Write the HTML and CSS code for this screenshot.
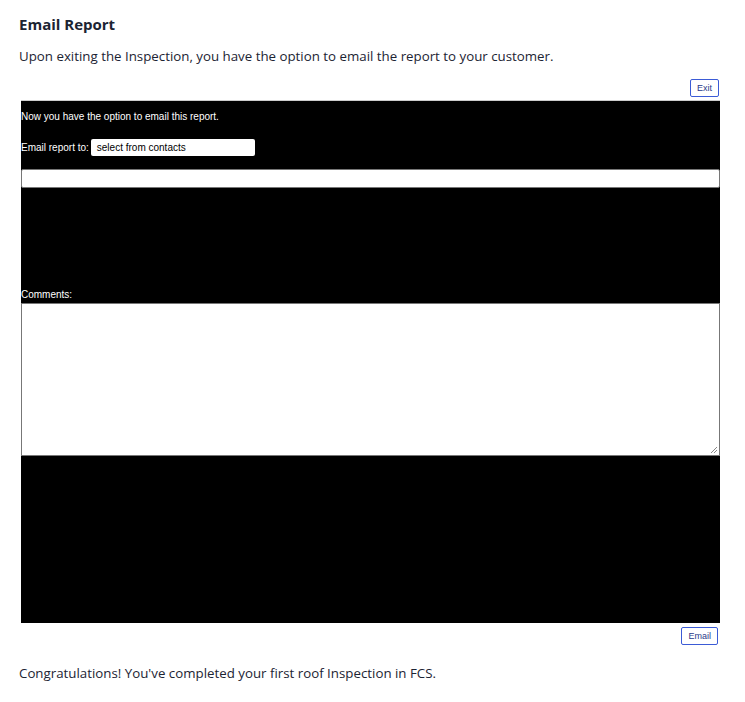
FILE: index.html
```html
<!DOCTYPE html>
<html>
<head>
<meta charset="utf-8">
<link rel="stylesheet" href="styles.css">
</head>
<body>
<div class="page">
  <h2 class="title">Email Report</h2>
  <p class="intro">Upon exiting the Inspection, you have the option to email the report to your customer.</p>
  <div class="toolbar exit"><button class="btn">Exit</button></div>
  <div class="panel">
    <div class="panel-note">Now you have the option to email this report.</div>
    <div class="row">
      <span class="label">Email report to:</span>
      <div class="select">select from contacts</div>
    </div>
    <div class="field"></div>
    <div class="spacer"></div>
    <div class="label comments">Comments:</div>
    <div class="textarea">
      <svg class="grip" width="8" height="8" viewBox="0 0 8 8"><path d="M7 1 L1 7 M7 4 L4 7" stroke="#888" stroke-width="1"/></svg>
    </div>
    <div class="bottom"></div>
  </div>
  <div class="toolbar email"><button class="btn">Email</button></div>
  <p class="congrats">Congratulations! You've completed your first roof Inspection in FCS.</p>
</div>
</body>
</html>
```
FILE: styles.css
```css
html, body { margin: 0; padding: 0; background: #fff; }
.page {
  padding: 14px 19px 0 19px;
  font-family: "Open Sans", "Noto Sans", sans-serif;
  color: #1c2433;
  width: 707px;
}
.title {
  margin: 0;
  font-size: 15px;
  font-weight: 700;
  line-height: 20px;
}
.intro {
  margin: 12px 0 0 0;
  font-size: 13.3px;
  line-height: 20px;
}
.toolbar {
  display: flex;
  justify-content: flex-end;
  padding-right: 7px;
}
.btn {
  font-family: "Liberation Sans", Arial, sans-serif;
  font-size: 9px;
  color: #2a3a8a;
  background: #fff;
  border: 1px solid #3b5bd6;
  border-radius: 2px;
  height: 18px;
  padding: 0 6px;
  margin: 0;
}
.exit { margin-top: 13px; }
.panel {
  margin: 3px 0 0 2px;
  width: 699px;
  height: 523px;
  background: #000;
  border-top: 1px solid #ccc;
  box-sizing: border-box;
  display: flex;
  flex-direction: column;
  font-family: "Liberation Sans", Arial, sans-serif;
  color: #fff;
  font-size: 10px;
}
.panel-note { margin-top: 10px; line-height: 12px; }
.row { display: flex; align-items: center; margin-top: 16px; gap: 2px; }
.label { line-height: 12px; }
.select {
  width: 164px;
  height: 17px;
  box-sizing: border-box;
  background: #fff;
  color: #000;
  border-radius: 2px;
  padding-left: 6px;
  line-height: 17px;
  font-size: 10px;
}
.field {
  margin-top: 13px;
  height: 19px;
  background: #fff;
  border: 1px solid #777;
  border-radius: 2px;
  box-sizing: border-box;
}
.spacer { height: 101px; }
.textarea {
  position: relative;
  height: 153px;
  background: #fff;
  border: 1px solid #777;
  box-sizing: border-box;
  margin-top: 2px;
}
.grip { position: absolute; right: 1px; bottom: 1px; }
.bottom { flex: 1; }
.email { margin-top: 4px; padding-right: 8px; }
.congrats {
  margin: 18px 0 0 0;
  font-size: 13.3px;
  line-height: 20px;
}
```
